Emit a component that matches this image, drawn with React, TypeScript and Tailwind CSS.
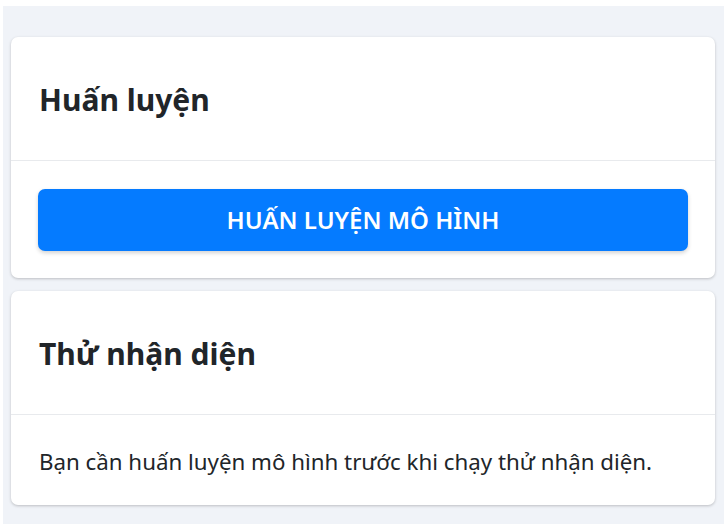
import React from "react";

const App: React.FC = () => {
  return (
    <div
      className="min-h-screen bg-white pt-[6px] pl-[3px]"
      style={{ fontFamily: '"Noto Sans", "Open Sans", sans-serif' }}
    >
      <div className="min-h-[518px] bg-[#f0f3f8] pt-[31px] pl-[8px] pr-[9px] pb-[13px] flex flex-col gap-[13px]">
        {/* Training card */}
        <div className="bg-white rounded-[7px] shadow-[0_1px_3px_rgba(0,0,0,0.22)]">
          <div className="h-[124px] flex items-center pt-[2px] px-[28px] border-b border-[#e8eaed]">
            <h2 className="text-[30px] font-bold text-[#212529] leading-none">
              Huấn luyện
            </h2>
          </div>
          <div className="px-[27px] pt-[28px] pb-[27px]">
            <button className="w-full h-[62px] rounded-[7px] bg-[#057bff] text-white text-[24px] font-semibold uppercase shadow-[0_2px_4px_rgba(0,0,0,0.18)]">
              Huấn luyện mô hình
            </button>
          </div>
        </div>

        {/* Recognition card */}
        <div className="bg-white rounded-[7px] shadow-[0_1px_3px_rgba(0,0,0,0.22)]">
          <div className="h-[124px] flex items-center pt-[2px] px-[28px] border-b border-[#e8eaed]">
            <h2 className="text-[30px] font-bold text-[#212529] leading-none">
              Thử nhận diện
            </h2>
          </div>
          <div className="h-[90px] flex items-center pt-[4px] px-[28px]">
            <p className="text-[22.3px] text-[#212529]">
              Bạn cần huấn luyện mô hình trước khi chạy thử nhận diện.
            </p>
          </div>
        </div>
      </div>
    </div>
  );
};

export default App;
